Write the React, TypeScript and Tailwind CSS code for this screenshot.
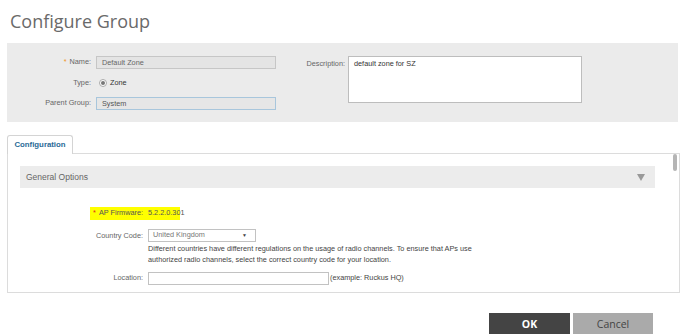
import React from 'react';

const sans = { fontFamily: '"Liberation Sans", Arial, sans-serif' };

function Label({ children, req }: { children: React.ReactNode; req?: boolean }) {
  return (
    <div className="w-[89px] shrink-0 pr-[5px] text-right text-[7.3px] text-[#666]">
      {req && <span className="mr-[3px] text-[#f0961e]">*</span>}
      {children}
    </div>
  );
}

export default function App() {
  return (
    <div className="w-[680px] h-[334px] overflow-hidden bg-white text-[#444]" style={sans}>
      <h1 className="pl-[10px] pt-[9px] h-[43px] text-[18px] leading-[24px] text-[#6a6a6a]" style={{ fontFamily: '"Open Sans", sans-serif' }}>
        Configure Group
      </h1>

      {/* group header panel */}
      <div className="ml-[7px] w-[671px] h-[79px] bg-[#ebebeb] flex pt-[13px]">
        <div className="flex flex-col gap-[7px]">
          <div className="flex items-center h-[13px]">
            <Label req>Name:</Label>
            <div className="w-[180px] h-[13px] border border-[#c6c6c6] bg-[#e4e4e4] pl-[5px] text-[7.3px] leading-[11px] text-[#666]">Default Zone</div>
          </div>
          <div className="flex items-center h-[14px]">
            <Label>Type:</Label>
            <div className="flex items-center gap-[3px] pl-[3px]">
              <span className="w-[8px] h-[8px] rounded-full border border-[#aaa] bg-white flex items-center justify-center">
                <span className="w-[4px] h-[4px] rounded-full bg-[#777]" />
              </span>
              <span className="text-[7.3px] text-[#333]">Zone</span>
            </div>
          </div>
          <div className="flex items-center h-[13px]">
            <Label>Parent Group:</Label>
            <div className="w-[180px] h-[13px] border border-[#a8c6dc] bg-[#e6e6e6] pl-[5px] text-[7.3px] leading-[11px] text-[#555]">System</div>
          </div>
        </div>
        <div className="flex ml-[20px]">
          <div className="w-[52px] pt-[3px] pr-[3px] text-right text-[7.3px] text-[#666]">Description:</div>
          <div className="w-[234px] h-[47px] border border-[#bdbdbd] bg-white pl-[5px] pt-[2px] text-[7.3px] text-[#333]">default zone for SZ</div>
        </div>
      </div>

      {/* tabs */}
      <div className="mt-[13px] ml-[7px] flex">
        <div className="w-[66px] h-[19px] border border-b-0 border-[#d4d4d4] rounded-t-[3px] bg-white text-[7.8px] font-bold text-[#2a6a96] flex items-center justify-center">
          Configuration
        </div>
      </div>
      <div className="ml-[7px] w-[673px] h-[140px] border border-[#dcdcdc] -mt-px flex">
        <div className="flex-1 pl-[12px] pt-[12px]">
          <div className="w-[635px] h-[22px] bg-[#ececec] flex items-center justify-between pl-[6px] pr-[10px]">
            <span className="text-[8.5px] text-[#666]">General Options</span>
            <svg width="8" height="7" viewBox="0 0 8 7"><path d="M0 0h8L4 7z" fill="#999" /></svg>
          </div>

          <div className="relative mt-[19px] flex items-center h-[13px]">
            <div className="absolute left-[70px] top-0 w-[90px] h-[13px] bg-[#ffff00]" />
            <div className="relative w-[128px] pr-[5px] text-right text-[7.3px] text-[#555]">
              <span className="mr-[3px] text-[#e0281e]">*</span>AP Firmware:
            </div>
            <div className="relative text-[7.3px] text-[#555]">5.2.2.0.301</div>
          </div>

          <div className="mt-[9px] flex">
            <div className="w-[128px] pr-[5px] pt-[2px] text-right text-[7.3px] text-[#666]">Country Code:</div>
            <div>
              <div className="w-[108px] h-[13px] border border-[#c2c2c2] bg-white flex items-center justify-between pl-[4px] pr-[8px] text-[7.3px] text-[#777]">
                <span>United Kingdom</span>
                <span className="text-[5px] text-[#444]">▼</span>
              </div>
              <div className="mt-[1px] text-[7.3px] leading-[11px] text-[#444]">
                <div>Different countries have different regulations on the usage of radio channels. To ensure that APs use</div>
                <div>authorized radio channels, select the correct country code for your location.</div>
              </div>
            </div>
          </div>

          <div className="mt-[7px] flex items-center">
            <div className="w-[128px] pr-[5px] text-right text-[7.3px] text-[#666]">Location:</div>
            <div className="w-[181px] h-[13px] border border-[#c2c2c2] bg-white" />
            <span className="ml-[1px] text-[7.3px] text-[#444]">(example: Ruckus HQ)</span>
          </div>
        </div>
        <div className="w-[6px] pr-[2px]">
          <div className="w-[4px] h-[17px] rounded-[2px] bg-[#b5b5b5]" />
        </div>
      </div>

      {/* actions */}
      <div className="mt-[20px] flex justify-end pr-[27px] gap-[3px]">
        <button className="w-[81px] h-[24px] bg-[#444] text-white text-[10.5px] font-bold" style={{ fontFamily: '"Open Sans", sans-serif' }}>OK</button>
        <button className="w-[80px] h-[24px] bg-[#aaaaaa] text-[#444] text-[10.5px]" style={{ fontFamily: '"Open Sans", sans-serif' }}>Cancel</button>
      </div>
    </div>
  );
}
